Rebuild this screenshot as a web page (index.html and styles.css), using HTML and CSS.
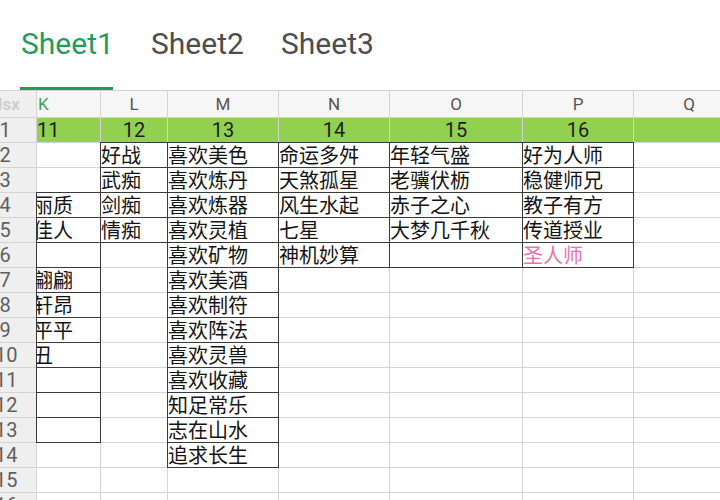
FILE: index.html
```html
<!DOCTYPE html>
<html lang="zh-CN">
<head>
<meta charset="utf-8">
<title>Sheet1</title>
<link rel="stylesheet" href="styles.css">
</head>
<body>
<div class="tabs">
  <div class="tab active">Sheet1</div>
  <div class="tab">Sheet2</div>
  <div class="tab">Sheet3</div>
</div>
<div class="viewport">
  <div class="sheet">
    <div class="corner"><span>lsx</span></div>
    <div class="ch ch-k">K</div><div class="ch">L</div><div class="ch">M</div><div class="ch">N</div><div class="ch">O</div><div class="ch">P</div><div class="ch">Q</div>

    <div class="rh"><span>1</span></div>
    <div class="g g-k">11</div><div class="g">12</div><div class="g">13</div><div class="g">14</div><div class="g">15</div><div class="g">16</div><div class="g"></div>

    <div class="rh"><span>2</span></div>
    <div class="c"></div><div class="c b">好战</div><div class="c b">喜欢美色</div><div class="c b">命运多舛</div><div class="c b">年轻气盛</div><div class="c b">好为人师</div><div class="c"></div>

    <div class="rh"><span>3</span></div>
    <div class="c"></div><div class="c b">武痴</div><div class="c b">喜欢炼丹</div><div class="c b">天煞孤星</div><div class="c b">老骥伏枥</div><div class="c b">稳健师兄</div><div class="c"></div>

    <div class="rh"><span>4</span></div>
    <div class="c b k">丽质</div><div class="c b">剑痴</div><div class="c b">喜欢炼器</div><div class="c b">风生水起</div><div class="c b">赤子之心</div><div class="c b">教子有方</div><div class="c"></div>

    <div class="rh"><span>5</span></div>
    <div class="c b k">佳人</div><div class="c b">情痴</div><div class="c b">喜欢灵植</div><div class="c b">七星</div><div class="c b">大梦几千秋</div><div class="c b">传道授业</div><div class="c"></div>

    <div class="rh"><span>6</span></div>
    <div class="c b k"></div><div class="c"></div><div class="c b">喜欢矿物</div><div class="c b">神机妙算</div><div class="c b"></div><div class="c b pink">圣人师</div><div class="c"></div>

    <div class="rh"><span>7</span></div>
    <div class="c b k">翩翩</div><div class="c"></div><div class="c b">喜欢美酒</div><div class="c"></div><div class="c"></div><div class="c"></div><div class="c"></div>

    <div class="rh"><span>8</span></div>
    <div class="c b k">轩昂</div><div class="c"></div><div class="c b">喜欢制符</div><div class="c"></div><div class="c"></div><div class="c"></div><div class="c"></div>

    <div class="rh"><span>9</span></div>
    <div class="c b k">平平</div><div class="c"></div><div class="c b">喜欢阵法</div><div class="c"></div><div class="c"></div><div class="c"></div><div class="c"></div>

    <div class="rh"><span>10</span></div>
    <div class="c b k">丑</div><div class="c"></div><div class="c b">喜欢灵兽</div><div class="c"></div><div class="c"></div><div class="c"></div><div class="c"></div>

    <div class="rh"><span>11</span></div>
    <div class="c b k"></div><div class="c"></div><div class="c b">喜欢收藏</div><div class="c"></div><div class="c"></div><div class="c"></div><div class="c"></div>

    <div class="rh"><span>12</span></div>
    <div class="c b k"></div><div class="c"></div><div class="c b">知足常乐</div><div class="c"></div><div class="c"></div><div class="c"></div><div class="c"></div>

    <div class="rh"><span>13</span></div>
    <div class="c b k"></div><div class="c"></div><div class="c b">志在山水</div><div class="c"></div><div class="c"></div><div class="c"></div><div class="c"></div>

    <div class="rh"><span>14</span></div>
    <div class="c"></div><div class="c"></div><div class="c b">追求长生</div><div class="c"></div><div class="c"></div><div class="c"></div><div class="c"></div>

    <div class="rh"><span>15</span></div>
    <div class="c"></div><div class="c"></div><div class="c"></div><div class="c"></div><div class="c"></div><div class="c"></div><div class="c"></div>

    <div class="rh"><span>16</span></div>
    <div class="c"></div><div class="c"></div><div class="c"></div><div class="c"></div><div class="c"></div><div class="c"></div><div class="c"></div>
  </div>
</div>
</body>
</html>
```
FILE: styles.css
```css
html, body {
  margin: 0;
  padding: 0;
  background: #ffffff;
  overflow: hidden;
}

body {
  width: 720px;
  height: 500px;
  font-family: Roboto, "Noto Sans", "Noto Sans CJK SC", sans-serif;
}

.tabs {
  display: flex;
  gap: 37px;
  height: 90px;
  padding-left: 20px;
  box-sizing: border-box;
}

.tab {
  width: 93px;
  height: 90px;
  box-sizing: border-box;
  padding: 24px 0 0 1px;
  font-size: 30px;
  line-height: 40px;
  white-space: nowrap;
  color: #4d4d4d;
  border-bottom: 3px solid transparent;
}

.tab.active {
  color: #1f9d5e;
  border-bottom-color: #1f9d5e;
}

.viewport {
  width: 720px;
  height: 410px;
  overflow: hidden;
}

.sheet {
  display: grid;
  grid-template-columns: 36px 63px 66px 110px 110px 132px 110px 110px;
  grid-template-rows: 26px repeat(16, 24px);
  gap: 1px;
  padding-top: 1px;
  background: #d4d4d4;
  width: max-content;
}

.corner,
.rh {
  background: #efefef;
  overflow: hidden;
  color: #5f5f5f;
  font-size: 20px;
  line-height: 24px;
}

.corner span {
  display: block;
  margin-left: -2px;
  color: #cfcfcf;
  font-size: 17px;
  font-weight: bold;
  line-height: 26px;
}

.rh span {
  display: block;
  width: 20px;
  margin-left: -5px;
  text-align: center;
}

.ch {
  background: #f6f6f6;
  color: #555555;
  font-size: 17px;
  line-height: 26px;
  text-align: center;
}

.ch-k {
  text-align: left;
  padding-left: 1px;
  color: #3da34f;
}

.g {
  background: #92d050;
  color: #1e1e1e;
  font-size: 20px;
  line-height: 24px;
  text-align: center;
}

.g-k {
  text-align: left;
}

.c {
  background: #ffffff;
  color: #141414;
  font-family: "Noto Sans CJK SC", "Noto Sans", sans-serif;
  font-size: 20px;
  line-height: 24px;
  white-space: nowrap;
  overflow: hidden;
}

.b {
  outline: 1px solid #3a3a3a;
}

.k {
  text-indent: -4px;
}

.pink {
  color: #f070ad;
}
```
